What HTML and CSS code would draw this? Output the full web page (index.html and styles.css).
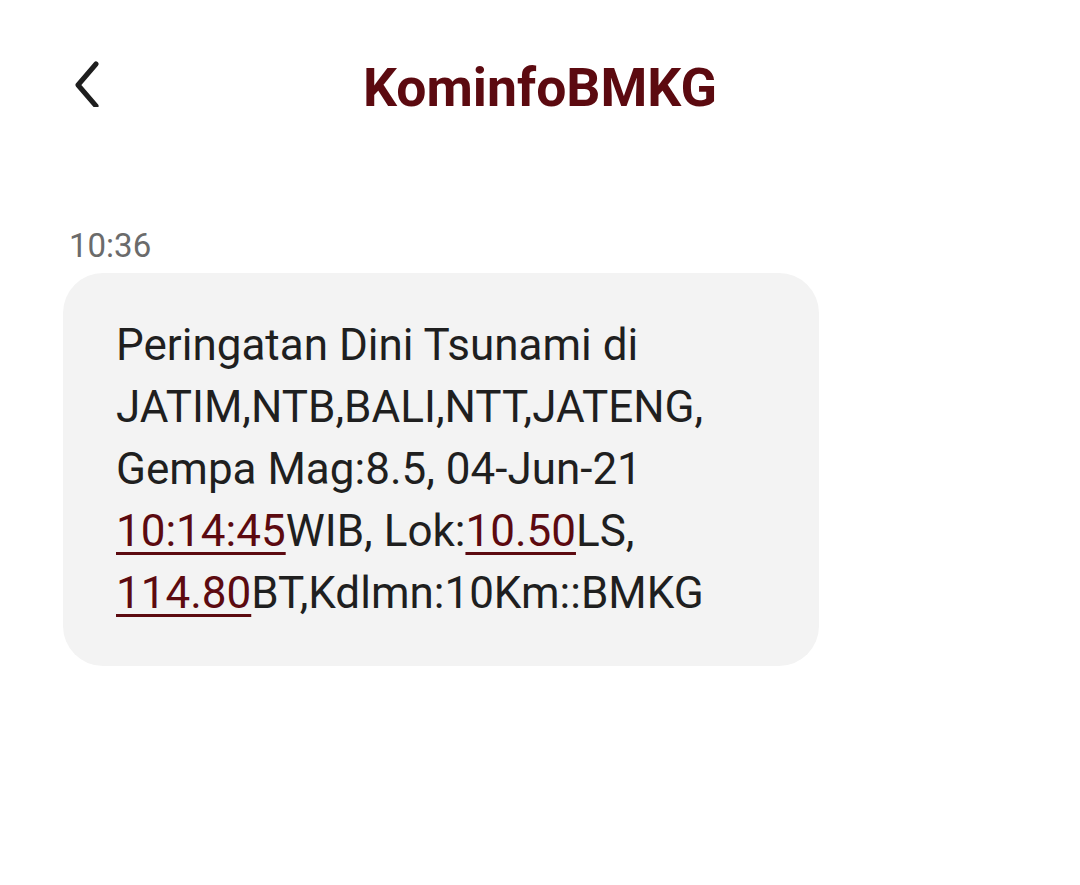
FILE: index.html
```html
<!DOCTYPE html>
<html lang="id">
<head>
  <meta charset="UTF-8" />
  <title>KominfoBMKG</title>
  <link rel="stylesheet" href="styles.css">
</head>
<body>
  <header class="topbar">
    <button class="back" aria-label="Kembali">
      <svg width="34" height="48" viewBox="0 0 34 48">
        <path d="M25 5 L7 26 L25 47" fill="none" stroke="#1e1e1e" stroke-width="5" stroke-linecap="round" stroke-linejoin="round"/>
      </svg>
    </button>
    <h1>KominfoBMKG</h1>
  </header>

  <main class="thread">
    <div class="time">10:36</div>
    <div class="bubble">
      Peringatan Dini Tsunami di JATIM,NTB,BALI,NTT,JATENG, Gempa Mag:8.5, 04-Jun-21 <a href="#">10:14:45</a>WIB, Lok:<a href="#">10.50</a>LS, <a href="#">114.80</a>BT,Kdlmn:10Km::BMKG
    </div>
  </main>
</body>
</html>
```

FILE: styles.css
```css
* {
  box-sizing: border-box;
}

body {
  margin: 0;
  background: #fff;
  font-family: Roboto, "Noto Sans", sans-serif;
  color: #1f1f1f;
}

.topbar {
  height: 170px;
  display: flex;
  align-items: flex-start;
  padding: 58px 0 0 68px;
}

.back {
  background: none;
  border: none;
  padding: 0;
  width: 40px;
  height: 52px;
  cursor: pointer;
}

.topbar h1 {
  margin: 0 0 0 255px;
  font-size: 53.5px;
  font-weight: 700;
  color: #5c0a10;
  line-height: 60px;
}

.thread {
  padding: 56px 0 0 63px;
}

.time {
  font-size: 33px;
  color: #6b6b6b;
  line-height: 40px;
  margin-left: 6px;
}

.bubble {
  width: 756px;
  margin-top: 7px;
  background: #f3f3f3;
  border-radius: 40px;
  padding: 41px 50px 42px 53px;
  font-size: 44px;
  line-height: 62px;
}

.bubble a {
  color: #5c0a10;
  text-decoration: underline;
  text-decoration-thickness: 3px;
  text-underline-offset: 6px;
}
```
